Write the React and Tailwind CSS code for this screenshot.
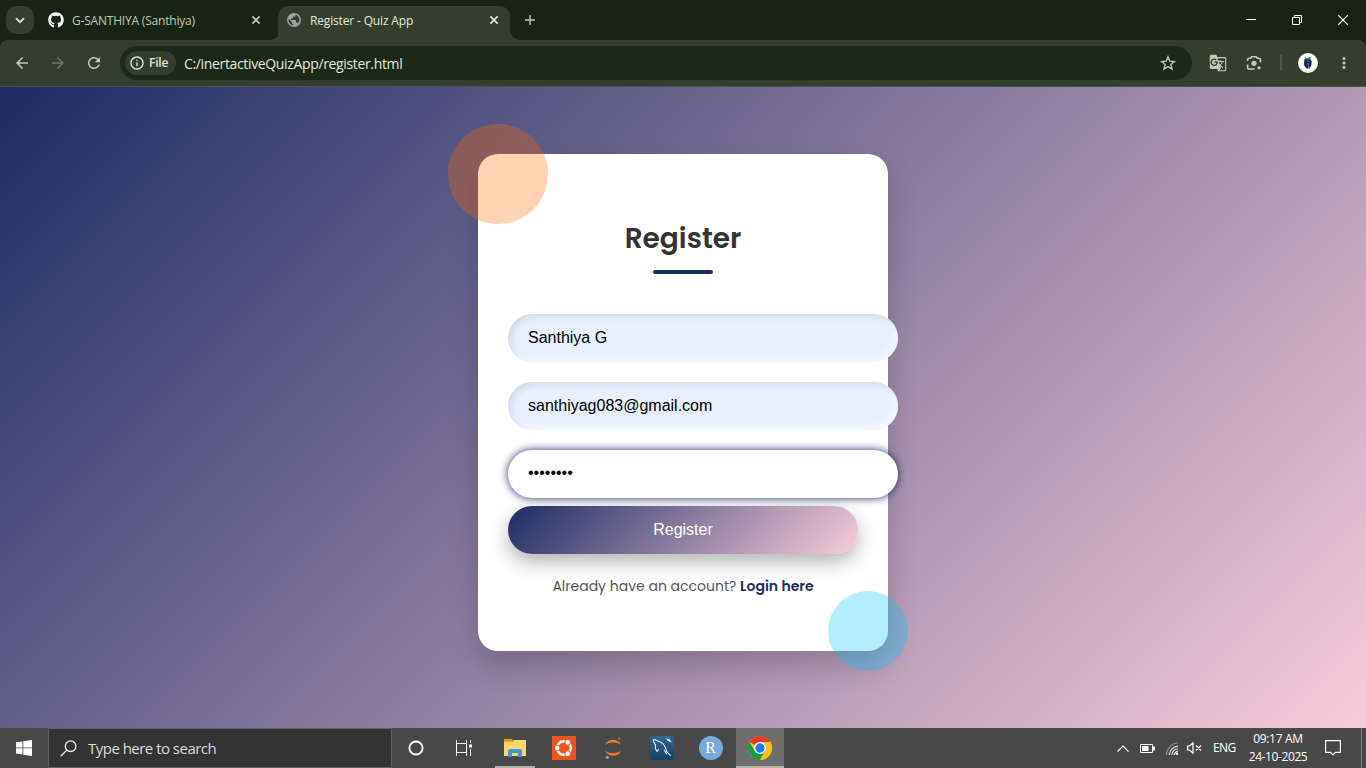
import React from "react";
import { MdArrowBack, MdArrowForward, MdRefresh, MdGTranslate, MdInfoOutline, MdMoreVert } from "react-icons/md";
import { FaGithub } from "react-icons/fa";

const ui = "font-['Segoe_UI','Open_Sans',sans-serif]";
const pop = "font-['Poppins','Inter',sans-serif]";

function Cross({ className }) {
  return (
    <svg className={className} width="10" height="10" viewBox="0 0 10 10" fill="none" stroke="currentColor" strokeWidth="1.6">
      <path d="M1.4 1.4l7.2 7.2M8.6 1.4l-7.2 7.2" />
    </svg>
  );
}

function TabStrip() {
  return (
    <div className={`flex h-[40px] shrink-0 items-start bg-[#182315] ${ui}`}>
      <button className="mt-[6px] ml-[6px] flex size-[28px] items-center justify-center rounded-[10px] bg-[#333e2f] text-[#dfe8d6]">
        <svg width="10" height="7" viewBox="0 0 10 7" fill="none" stroke="currentColor" strokeWidth="1.8">
          <path d="M1 1.2l4 4 4-4" />
        </svg>
      </button>
      <div className="flex h-[40px] w-[236px] items-center pl-[14px] text-[#bfccb3]">
        <FaGithub className="size-[16px] text-white" />
        <span className="ml-[8px] w-[170px] pt-[2px] text-[12px] tracking-[-0.2px] whitespace-nowrap">G-SANTHIYA (Santhiya)</span>
        <Cross className="ml-[9px]" />
      </div>
      <svg className="mt-[30px]" width="10" height="10" viewBox="0 0 10 10">
        <path d="M10 0v10H0A10 10 0 0 0 10 0z" fill="#333e2f" />
      </svg>
      <div className="mt-[6px] -ml-[2px] flex h-[34px] w-[232px] items-center rounded-t-[10px] bg-[#333e2f] pb-[6px] pl-[8px] text-[#e1e9d9]">
        <svg width="16" height="16" viewBox="0 0 16 16">
          <circle cx="8" cy="8" r="7" fill="#9aa0a6" />
          <path d="M9.6 2.4v1q0 1.2-1.3 1.2H7v1.2q0 .8-.8.8H5v1.3h4.1q.8 0 .8.8v1.8h.8q1 0 1.3.9A5.6 5.6 0 0 0 9.6 2.4zM2.6 6.8A5.6 5.6 0 0 0 7.3 13.5v-1.3q-1.3 0-1.3-1.3v-.7z" fill="#333e2f" />
        </svg>
        <span className="ml-[8px] w-[170px] pt-[2px] text-[12px] tracking-[-0.16px] whitespace-nowrap">Register - Quiz App</span>
        <Cross className="ml-[9px]" />
      </div>
      <svg className="mt-[30px]" width="10" height="10" viewBox="0 0 10 10">
        <path d="M0 0v10h10A10 10 0 0 1 0 0z" fill="#333e2f" />
      </svg>
      <svg className="mt-[15px] ml-[5px] text-[#bfccb3]" width="10" height="10" viewBox="0 0 10 10" stroke="currentColor" strokeWidth="1.4">
        <path d="M5 0v10M0 5h10" />
      </svg>
      <div className="ml-auto flex items-center pt-[15px] pr-[18px] text-white">
        <svg width="10" height="10" viewBox="0 0 10 10" stroke="currentColor"><path d="M0 4.5h10" /></svg>
        <svg className="ml-[36px]" width="10" height="10" viewBox="0 0 10 10" fill="none" stroke="currentColor">
          <path d="M.5 2.5h7v7h-7zM2.5 2.5v-2h7v7h-2" />
        </svg>
        <svg className="ml-[36px]" width="10" height="10" viewBox="0 0 10 10" stroke="currentColor" strokeWidth="1.2"><path d="M.2.2l9.6 9.6M9.8.2L.2 9.8" /></svg>
      </div>
    </div>
  );
}

function Toolbar() {
  return (
    <div className="h-[47px] shrink-0 bg-[#182315]">
      <div className={`flex h-[47px] items-center rounded-t-[8px] border-b border-[#4b5347] bg-[#333e2f] text-[#bfccb3] ${ui}`}>
        <MdArrowBack className="ml-[13px] size-[18px]" />
        <MdArrowForward className="ml-[18px] size-[18px] text-[#6b7763]" />
        <MdRefresh className="ml-[18px] size-[18px]" />
        <div className="ml-[17px] flex h-[34px] w-[1072px] items-center rounded-full bg-[#1c2819] pl-[5px]">
          <div className="flex h-[24px] w-[51px] items-center rounded-full bg-[#333e2f] pl-[4px] text-[#e1e9d9]">
            <MdInfoOutline className="size-[16px]" />
            <span className="ml-[4px] text-[12px] font-semibold tracking-[-0.2px]">File</span>
          </div>
          <span className="ml-[8px] text-[14px] tracking-[-0.35px] whitespace-nowrap text-[#e1e9d9]">C:/inertactiveQuizApp/register.html</span>
          <svg className="mr-[16px] ml-auto" width="16" height="16" viewBox="0 0 16 16" fill="none" stroke="currentColor" strokeWidth="1.4">
            <path d="M8 1.9l1.8 4.2 4.6.4-3.5 3 1.1 4.5L8 11.6 4 14l1.1-4.5-3.5-3 4.6-.4z" />
          </svg>
        </div>
        <MdGTranslate className="ml-[17px] size-[18px]" />
        <svg className="ml-[19px]" width="16" height="16" viewBox="0 0 16 16" fill="none" stroke="currentColor" strokeWidth="1.6">
          <path d="M1.6 6V5q0-1.8 1.8-1.8H4.6L5.6 1.8h4.6l1 1.4h1.5q1.8 0 1.8 1.8V7.4M1.6 9.6v2.6q0 1.8 1.8 1.8H8.6" />
          <circle cx="8" cy="8.3" r="2.6" fill="currentColor" stroke="none" />
          <circle cx="13" cy="12.8" r="1.6" fill="currentColor" stroke="none" />
        </svg>
        <div className="ml-[18px] h-[16px] w-[2px] bg-[#4b5a43]" />
        <svg className="ml-[16px]" width="20" height="20" viewBox="0 0 20 20">
          <circle cx="10" cy="10" r="10" fill="#fff" />
          <path d="M6.4 6.3l2.3-.9 3.5.4 1.5 2.8-.5 4.4-2.2 2.9-3-1-2-3z" fill="#17234f" />
          <path d="M7 3.8l1.8 1.4L11.8 4l1.2 1-2.2 1.6H7.6z" fill="#3b8063" />
          <path d="M9.3 7.6h2v1.6h-2z" fill="#4c66c4" />
          <path d="M10 13.5h1.4v2.5H10z" fill="#d08a72" />
          <path d="M9 9.8l2.2 1-.8 2.4z" fill="#4f8be0" />
        </svg>
        <MdMoreVert className="ml-[17px] size-[18px]" />
      </div>
    </div>
  );
}

const autofilled = "bg-[#e8f0fe] shadow-[inset_3px_3px_7px_rgba(0,0,0,0.1),inset_-3px_-3px_7px_rgba(255,255,255,0.7)]";

function RegisterPage() {
  const field = "h-[48px] w-[390px] rounded-[30px] px-[20px] text-[16px] text-black font-['Liberation_Sans',Arial,sans-serif]";
  return (
    <div className="flex h-[641px] shrink-0 justify-center overflow-hidden bg-[linear-gradient(135deg,#1d2b64,#f8cdda)] pt-[67px]">
      <div className="relative flex h-[497px] w-[410px] flex-col rounded-[20px] bg-white px-[30px] shadow-[0_15px_30px_rgba(0,0,0,0.2)]">
        <div className="absolute -top-[30px] -left-[30px] size-[100px] rounded-full bg-[#ff6a00] opacity-30" />
        <h2 className={`mt-[64px] text-center text-[28px] leading-[42px] font-semibold text-[#333] ${pop}`}>Register</h2>
        <div className="mt-[10px] h-[4px] w-[60px] self-center rounded-[2px] bg-[#1d2b64]" />
        <div className="mt-[40px] flex flex-col">
          <div className={`${field} ${autofilled} leading-[48px]`}>Santhiya G</div>
          <div className={`${field} ${autofilled} mt-[20px] leading-[48px]`}>santhiyag083@gmail.com</div>
          <div className={`${field} mt-[20px] bg-white leading-[46px] shadow-[0_0_8px_#1d2b64]`}>••••••••</div>
          <button className="mt-[8px] h-[48px] w-[350px] rounded-[30px] bg-[linear-gradient(135deg,#1d2b64,#f8cdda)] font-['Liberation_Sans',Arial,sans-serif] text-[16px] text-white shadow-[0_8px_20px_rgba(0,0,0,0.3)]">Register</button>
        </div>
        <p className={`mt-[22px] text-center text-[14px] leading-[21px] whitespace-nowrap text-[#555] ${pop}`}>
          Already have an account? <span className="font-semibold text-[#1d2b64]">Login here</span>
        </p>
        <div className="absolute -right-[20px] -bottom-[20px] size-[80px] rounded-full bg-[#00c6ff] opacity-30" />
      </div>
    </div>
  );
}

function TaskItem({ children, className = "w-[49px]" }) {
  return <div className={`flex h-full items-center justify-center ${className}`}>{children}</div>;
}

function Taskbar() {
  return (
    <div className={`flex h-[40px] shrink-0 items-center bg-[#484848] text-white ${ui}`}>
      <div className="flex w-[48px] items-center justify-center">
        <svg width="16" height="16" viewBox="0 0 16 16" fill="#fff">
          <path d="M0 2.3L6.5 1.4v6.1H0zM7.3 1.3L16 0v7.5H7.3zM0 8.3h6.5v6.1L0 13.6zM7.3 8.3H16V16l-8.7-1.3z" />
        </svg>
      </div>
      <div className="flex h-[40px] w-[344px] items-center border border-[#606060] bg-[#333] pl-[11px]">
        <svg width="17" height="17" viewBox="0 0 17 17" fill="none" stroke="#eee" strokeWidth="1.3">
          <circle cx="10.6" cy="6.2" r="5.3" /><path d="M6.8 10.1L.7 16.2" />
        </svg>
        <span className="ml-[11px] text-[15px] tracking-[-0.52px] whitespace-nowrap text-[#dcdcdc]">Type here to search</span>
      </div>
      <TaskItem className="w-[48px]">
        <svg width="16" height="16" viewBox="0 0 16 16" fill="none" stroke="#f5f5f5" strokeWidth="2"><circle cx="8" cy="8" r="6.6" /></svg>
      </TaskItem>
      <TaskItem className="w-[48px]">
        <svg className="-ml-px" width="17" height="16" viewBox="0 0 17 16" fill="none" stroke="#fff">
          <path d="M1.5 0v3.5h10V0M1.5 16v-3.5h10V16M1.5 3.5v9M11.5 3.5v9M15.5 0v3M15.5 9v7" /><path d="M14 4.5h3v3h-3z" fill="#fff" stroke="none" />
        </svg>
      </TaskItem>
      <TaskItem className="relative w-[51px] pl-[3px]">
        <svg width="22" height="18" viewBox="0 0 22 18">
          <path d="M0 0h8l1.5 2H22v3H0z" fill="#e5a00d" /><path d="M0 3h9l1-2h12v16H0z" fill="#fdd66f" />
          <path d="M4 18v-6q0-2 2-2h10q2 0 2 2v6h-4v-4H8v4z" fill="#3c97de" />
        </svg>
        <div className="absolute bottom-0 left-[7px] h-[2px] w-[40px] bg-[#b4b4ae]" />
      </TaskItem>
      <TaskItem>
        <svg className="ml-px" width="24" height="24" viewBox="0 0 24 24">
          <path d="M0 0h24v24H0z" fill="#e95420" />
          <circle cx="12" cy="12" r="6.8" fill="none" stroke="#fff" strokeWidth="2.4" />
          <g fill="#fff" stroke="#e95420"><circle cx="5.2" cy="12" r="2.9" /><circle cx="15.7" cy="6.3" r="2.9" /><circle cx="15.7" cy="17.7" r="2.9" /></g>
        </svg>
      </TaskItem>
      <TaskItem>
        <svg width="20" height="24" viewBox="0 0 20 24">
          <path d="M2 8.8C5 2.2 15 2.2 18 8.8 14 5.6 6 5.6 2 8.8zM2 14.8c3 6.6 13 6.6 16 0-4 3.2-12 3.2-16 0z" fill="#f37726" />
          <circle cx="16.3" cy="2.4" r="1.3" fill="#767677" /><circle cx="4.3" cy="21.3" r="1.5" fill="#9e9e9e" /><circle cx="3" cy="3.5" r=".6" fill="#676767" />
        </svg>
      </TaskItem>
      <TaskItem>
        <svg width="24" height="24" viewBox="0 0 24 24">
          <defs><linearGradient id="db" x2="0" y2="1"><stop stopColor="#2f6995" /><stop offset="1" stopColor="#14425f" /></linearGradient></defs>
          <rect width="24" height="24" rx="3" fill="url(#db)" />
          <path d="M7 15.6L5.3 12.6 5.6 9.2 3.4 5.4Q3 3.4 5 3.6L7.6 5c4.2.9 6.8 3.8 8 7.2l1.2 3.4 4 4.2M7 15.6l1.8-2.4M14.2 14l2.6 4.2" fill="none" stroke="#dfe9f1" strokeWidth="1.1" />
          <path d="M16 1.6l2.2 1.8 1-.8 1.6 2.6 1.6 1-2.4-.2-2.8-1.6z" fill="#e5edf3" />
        </svg>
      </TaskItem>
      <TaskItem className="w-[50px] pr-px">
        <div className="flex size-[24px] items-center justify-center rounded-full bg-[#75aadb] font-['Liberation_Serif',serif] text-[16px] leading-none text-white">R</div>
      </TaskItem>
      <div className="flex h-full w-[48px] flex-col items-center border-b-2 border-[#b4b4ae] bg-[#6e6e6e] pt-[8px]">
        <svg className="size-[24px] shrink-0" viewBox="0 0 24 24">
          <circle cx="12" cy="12" r="12" fill="#fbc116" />
          <path d="M12 12L1.6 6A12 12 0 0 1 22.4 6H12z" fill="#e33b2e" />
          <path d="M1.6 6A12 12 0 0 0 12 24l5.2-9L12 12 6.8 15z" fill="#199c4b" />
          <path d="M12 6h10.4A12 12 0 0 1 12 24l5.2-9z" fill="#fbc116" />
          <circle cx="12" cy="12" r="6" fill="#fff" /><circle cx="12" cy="12" r="4.7" fill="#2979e8" />
        </svg>
      </div>
      <div className="ml-auto flex h-full items-center">
        <svg width="12" height="7" viewBox="0 0 12 7" fill="none" stroke="#fff" strokeWidth="1.2"><path d="M.5 6.5L6 1l5.5 5.5" /></svg>
        <svg className="ml-[11px]" width="15" height="9" viewBox="0 0 15 9" fill="none" stroke="#fff">
          <path d="M.5.5h12v8H.5z" /><path d="M2 2h6.5v5H2zM13 2.5h2v4h-2z" fill="#fff" stroke="none" />
        </svg>
        <svg className="ml-[11px]" width="13" height="13" viewBox="0 0 13 13" fill="none" strokeWidth="1.1">
          <path d="M.6 13A12.4 12.4 0 0 1 12 .8" stroke="#929292" />
          <path d="M3.2 13A10 10 0 0 1 12 4M5.8 13A7 7 0 0 1 12 6.7M8.2 13A4.5 4.5 0 0 1 12 9.2" stroke="#eee" /><circle cx="11" cy="11.8" r="1.2" fill="#fff" />
        </svg>
        <svg className="ml-[8px]" width="15" height="12" viewBox="0 0 15 12" fill="none" stroke="#fff" strokeWidth="1.2">
          <path d="M.6 4h2L6 .8v10.4L2.6 8h-2zM9 3.5l5 5M14 3.5l-5 5" />
        </svg>
        <span className="ml-[11px] w-[24px] text-[12px] tracking-[-0.6px]">ENG</span>
        <div className="ml-[11px] flex w-[60px] flex-col items-center text-[12px] leading-[18px] whitespace-nowrap">
          <span className="tracking-[-0.3px]">09:17 AM</span>
          <span className="tracking-[-0.4px]">24-10-2025</span>
        </div>
        <svg className="ml-[17px]" width="16" height="16" viewBox="0 0 16 16" fill="none" stroke="#fff" strokeWidth="1.1">
          <path d="M.6.6h14.8v11.8h-5L8 14.8l-2.4-2.4h-5z" />
        </svg>
        <div className="mr-[4px] ml-[20px] h-full w-px bg-[#858585]" />
      </div>
    </div>
  );
}

export default function App() {
  return (
    <div className="flex h-[768px] w-[1366px] flex-col overflow-hidden">
      <TabStrip />
      <Toolbar />
      <RegisterPage />
      <Taskbar />
    </div>
  );
}
